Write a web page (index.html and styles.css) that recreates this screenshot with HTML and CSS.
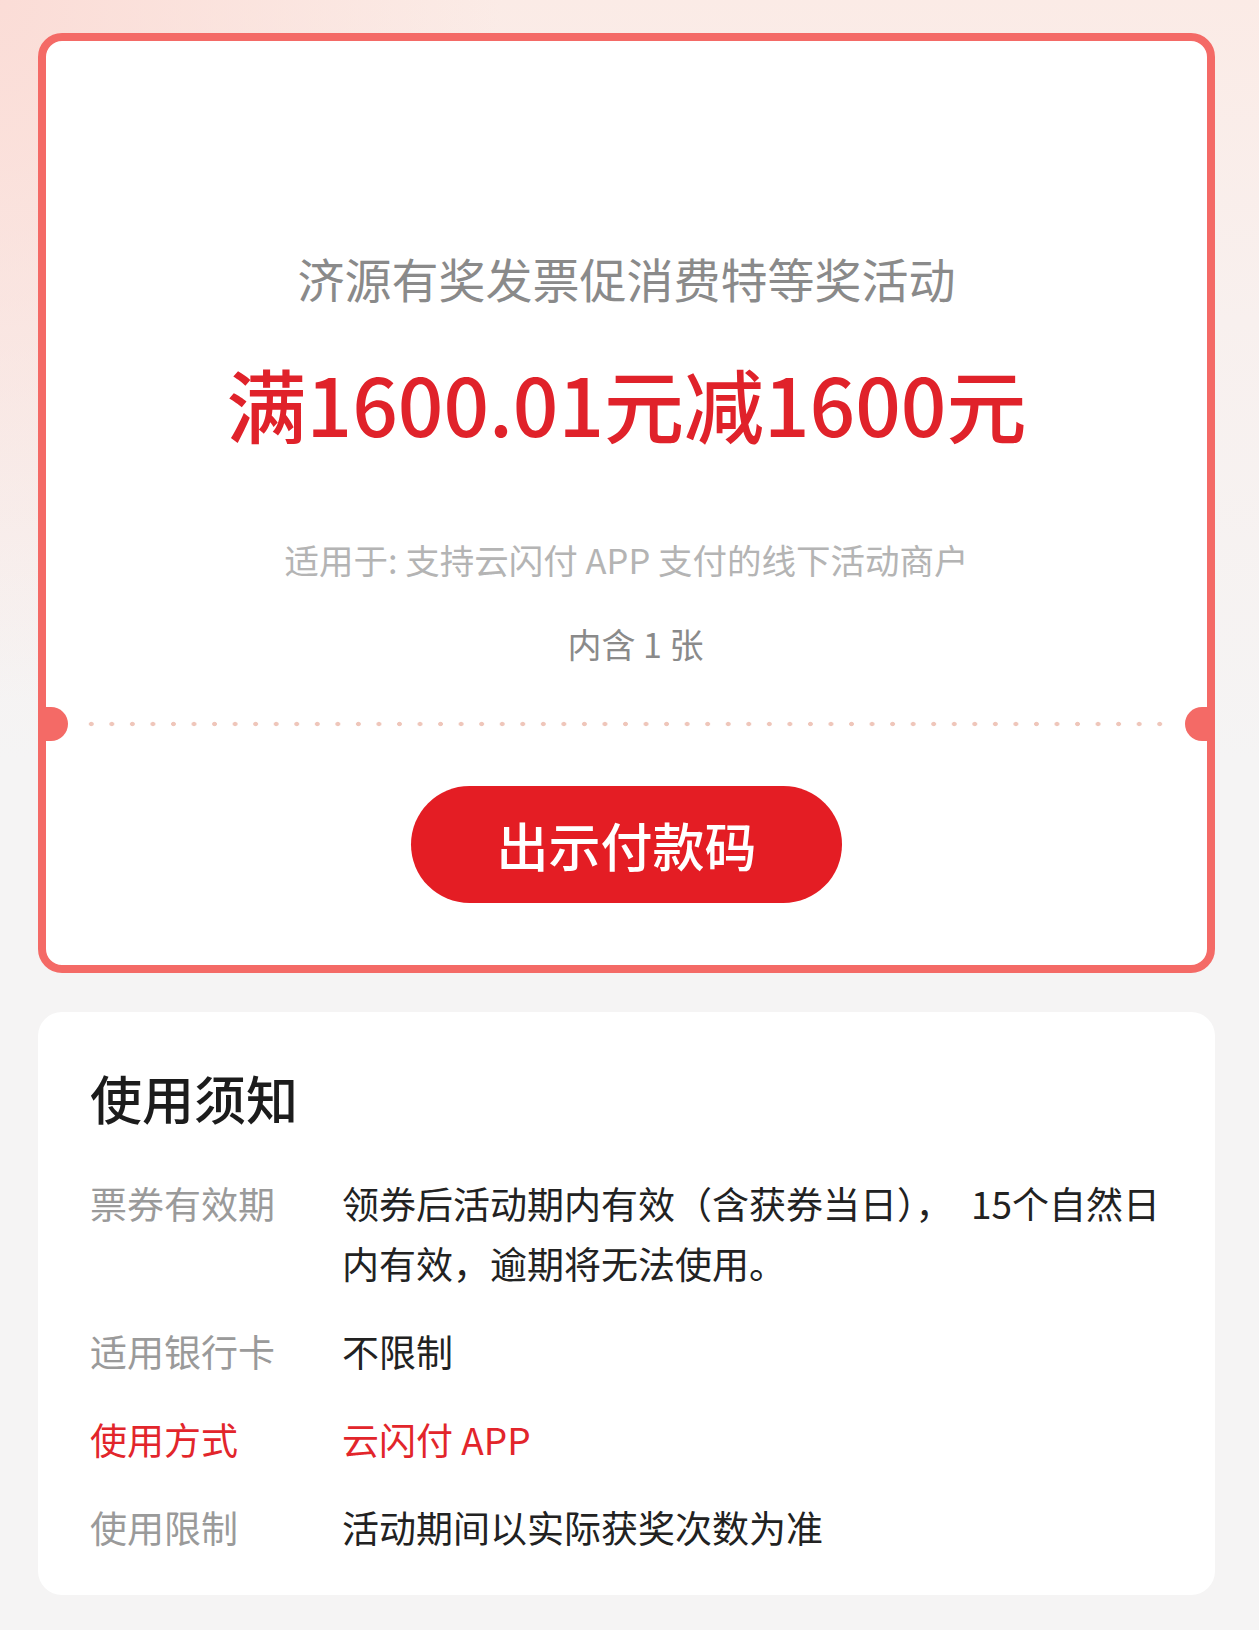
FILE: index.html
```html
<!DOCTYPE html>
<html lang="zh-CN">
<head>
  <meta charset="UTF-8">
  <meta name="viewport" content="width=device-width, initial-scale=1.0">
  <title>优惠券详情</title>
  <link rel="stylesheet" href="styles.css">
</head>
<body>
  <div class="page">
    <div class="coupon">
      <h2 class="coupon-title">济源有奖发票促消费特等奖活动</h2>
      <p class="coupon-amount">满1600.01元减1600元</p>
      <p class="coupon-scope">适用于: 支持云闪付 APP 支付的线下活动商户</p>
      <p class="coupon-count">内含 1 张</p>
      <div class="divider">
        <span class="notch notch-left"></span>
        <span class="dots"></span>
        <span class="notch notch-right"></span>
      </div>
      <button class="pay-btn">出示付款码</button>
    </div>

    <div class="notice">
      <h3 class="notice-title">使用须知</h3>
      <div class="notice-list">
        <div class="notice-label">票券有效期</div>
        <div class="notice-value">领券后活动期内有效（含获券当日），&ensp;15个自然日内有效，逾期将无法使用。</div>
        <div class="notice-label">适用银行卡</div>
        <div class="notice-value">不限制</div>
        <div class="notice-label red">使用方式</div>
        <div class="notice-value red">云闪付 APP</div>
        <div class="notice-label">使用限制</div>
        <div class="notice-value">活动期间以实际获奖次数为准</div>
      </div>
    </div>
  </div>
</body>
</html>
```

FILE: styles.css
```css
body {
  margin: 0;
  padding: 0;
  min-height: 1630px;
  font-family: "Noto Sans CJK SC", "Noto Sans", sans-serif;
  color: #222;
  background-color: #f5f4f4;
  background-image:
    radial-gradient(ellipse 500px 700px at 0 0, rgba(251, 220, 214, 0.95), rgba(251, 220, 214, 0) 100%),
    linear-gradient(180deg, #fbebe6 0, #f8f0ee 320px, #f5f4f4 760px);
  background-repeat: no-repeat;
}
.page {
  padding: 33px 44px 0 38px;
}
.coupon {
  position: relative;
  background-color: #fff;
  border: 8px solid #f46a66;
  border-radius: 24px;
  padding: 207px 0 62px;
  text-align: center;
}
.coupon-title {
  margin: 0;
  font-size: 47px;
  line-height: 60px;
  font-weight: 400;
  color: #8a8a8a;
}
.coupon-amount {
  margin: 44px 0 0;
  font-size: 80px;
  line-height: 100px;
  font-weight: 500;
  color: #e0222a;
}
.coupon-scope {
  margin: 84px 0 0;
  font-size: 34.5px;
  line-height: 46px;
  color: #b4b4b4;
}
.coupon-count {
  margin: 40px 0 0;
  padding-left: 18px;
  font-size: 34px;
  line-height: 44px;
  color: #8a8a8a;
}
.divider {
  display: flex;
  align-items: center;
  justify-content: space-between;
  height: 34px;
  margin-top: 41px;
}
.notch {
  width: 22px;
  height: 34px;
  background-color: #f46a66;
}
.notch-left {
  border-radius: 0 17px 17px 0;
}
.notch-right {
  border-radius: 17px 0 0 17px;
}
.dots {
  flex: 1;
  height: 6px;
  margin: 0 15px 0 13px;
  background-image: radial-gradient(circle, #efc6ba 2px, transparent 2.6px);
  background-size: 20.55px 6px;
  background-repeat: repeat-x;
}
.pay-btn {
  display: block;
  margin: 45px auto 0;
  width: 431px;
  height: 117px;
  border: none;
  border-radius: 59px;
  background-color: #e41d24;
  color: #fff;
  font-family: inherit;
  font-size: 52px;
  font-weight: 500;
  cursor: pointer;
}
.notice {
  margin-top: 39px;
  background-color: #fff;
  border-radius: 24px;
  padding: 50px 43px 38px 52px;
}
.notice-title {
  margin: 0;
  font-size: 52px;
  line-height: 72px;
  font-weight: 500;
  color: #1c1c1c;
}
.notice-list {
  display: grid;
  grid-template-columns: 252px 1fr;
  row-gap: 28px;
  margin-top: 39px;
  font-size: 37px;
  line-height: 60px;
}
.notice-label {
  color: #9a9a9a;
}
.notice-value {
  color: #222;
}
.notice-label.red, .notice-value.red {
  color: #e2252b;
}
```
